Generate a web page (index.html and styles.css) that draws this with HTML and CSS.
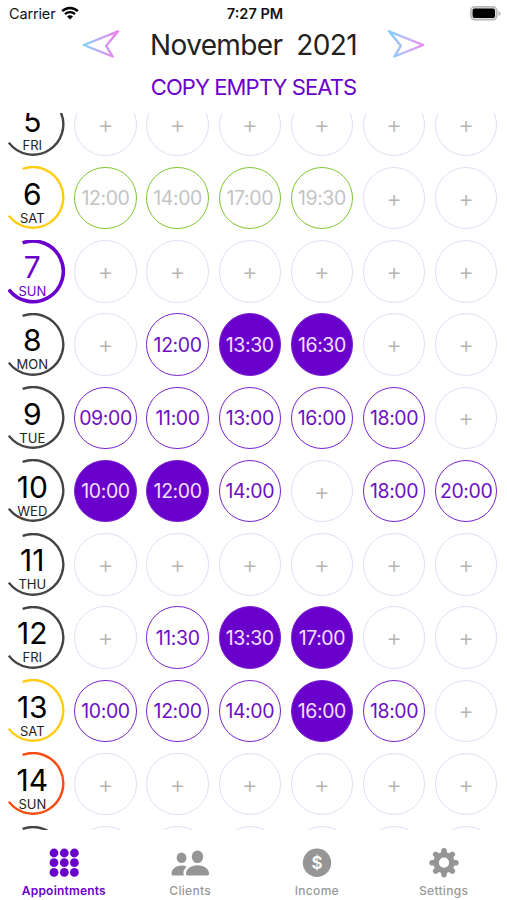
FILE: index.html
```html
<!DOCTYPE html>
<html lang="en">

<head>
    <meta charset="UTF-8">
    <meta name="viewport" content="width=device-width, initial-scale=1.0">
    <title>Appointments</title>
    <link rel="stylesheet" href="styles.css">
</head>

<body>
    <div class="status-bar">
        <div class="carrier">
            <span class="carrier-name">Carrier</span>
            <svg class="wifi" viewBox="0 0 18 14" width="18" height="14">
                <path d="M1.2 5.2A11.2 11.2 0 0 1 16.8 5.2" fill="none" stroke="#000" stroke-width="2.5" />
                <path d="M4 8.2A7.2 7.2 0 0 1 14 8.2" fill="none" stroke="#000" stroke-width="2.3" />
                <path d="M6 10.4A4.2 4.2 0 0 1 12 10.4L9 13.6Z" />
            </svg>
        </div>
        <span class="clock">7:27 PM</span>
        <svg class="battery" viewBox="0 0 31 15" width="31" height="15">
            <rect x="0.8" y="0.8" width="26" height="13" rx="4" fill="#ddd" stroke="#b5b5b5" stroke-width="1.5" />
            <rect x="2.6" y="2.6" width="22.4" height="9.4" rx="2" />
            <path d="M28.6 5v5q2-.8 2-2.5t-2-2.5z" fill="#b5b5b5" />
        </svg>
    </div>

    <header class="month-bar">
        <svg class="arrow" viewBox="0 0 38 32" width="38" height="32">
            <defs>
                <linearGradient id="prev-color">
                    <stop offset="0" stop-color="#7fd4fa" />
                    <stop offset="0.5" stop-color="#c2a8f2" />
                    <stop offset="1" stop-color="#ee7dea" />
                </linearGradient>
            </defs>
            <path d="M1.8 16L36 2.3L24.2 16.8L30.6 27.5Z" stroke="url(#prev-color)" />
        </svg>
        <h1 class="month"><span>November</span><span>2021</span></h1>
        <svg class="arrow" viewBox="0 0 38 32" width="38" height="32">
            <defs>
                <linearGradient id="next-color">
                    <stop offset="0" stop-color="#7fd0fa" />
                    <stop offset="0.5" stop-color="#bdb4f8" />
                    <stop offset="1" stop-color="#ee86f0" />
                </linearGradient>
            </defs>
            <path d="M36.2 16L2 2.3L13.8 16.8L7.4 27.5Z" stroke="url(#next-color)" />
        </svg>
    </header>

    <button class="copy-btn">COPY EMPTY SEATS</button>

    <main class="schedule" id="schedule"></main>

    <nav class="tab-bar">
        <a class="tab active">
            <svg viewBox="0 0 30 30" width="30" height="30">
                <circle cx="5" cy="5" r="4.4" /><circle cx="15.3" cy="5" r="4.4" /><circle cx="25.4" cy="5" r="4.4" />
                <circle cx="5" cy="14.7" r="4.4" /><circle cx="15.3" cy="14.7" r="4.4" /><circle cx="25.4" cy="14.7" r="4.4" />
                <circle cx="5" cy="24.4" r="4.4" /><circle cx="15.3" cy="24.4" r="4.4" /><circle cx="25.4" cy="24.4" r="4.4" />
            </svg>
            <span>Appointments</span>
        </a>
        <a class="tab">
            <svg viewBox="0 0 40 30" width="40" height="30">
                <ellipse cx="11.5" cy="9.8" rx="4.9" ry="5.3" />
                <path d="M3.2 27.5q-1.7 0-1.7-1.5c0-5 4.5-8.5 10-8.5q3.2 0 5.3 1.2c-2.500 2-4.200 5-2.800 8.800z" />
                <ellipse cx="27.5" cy="8.8" rx="5.7" ry="6.3" />
                <path d="M17.5 27.5q-1.6 0-1.6-1.7c0-4.6 5-8.6 11.6-8.6s11.6 4 11.6 8.6q0 1.7-1.6 1.7z" />
            </svg>
            <span>Clients</span>
        </a>
        <a class="tab">
            <svg viewBox="0 0 30 30" width="30" height="30">
                <circle cx="15" cy="14.7" r="14.2" />
                <text class="dollar" x="15" y="20.8" text-anchor="middle">$</text>
            </svg>
            <span>Income</span>
        </a>
        <a class="tab">
            <svg viewBox="0 0 30 30" width="30" height="30">
                <g class="gear">
                    <circle cx="15" cy="14.7" r="7.9" />
                    <path d="M15 2.8V5M15 24.4V26.6M3.1 14.7H5.3M24.7 14.7H26.9M6.7 6.4L8 7.7M22 21.7L23.3 23M6.7 23L8 21.7M22 7.7L23.3 6.4" />
                </g>
            </svg>
            <span>Settings</span>
        </a>
    </nav>

    <script>
        // slot: '' = empty, '*' = booked, '-' = past
        const days = [
            { date: 5, name: 'FRI', slots: [] },
            { date: 6, name: 'SAT', type: 'saturday', slots: ['-12:00', '-14:00', '-17:00', '-19:30'] },
            { date: 7, name: 'SUN', type: 'today', slots: [] },
            { date: 8, name: 'MON', slots: ['', '12:00', '*13:30', '*16:30'] },
            { date: 9, name: 'TUE', slots: ['09:00', '11:00', '13:00', '16:00', '18:00'] },
            { date: 10, name: 'WED', slots: ['*10:00', '*12:00', '14:00', '', '18:00', '20:00'] },
            { date: 11, name: 'THU', slots: [] },
            { date: 12, name: 'FRI', slots: ['', '11:30', '*13:30', '*17:00'] },
            { date: 13, name: 'SAT', type: 'saturday', slots: ['10:00', '12:00', '14:00', '*16:00', '18:00'] },
            { date: 14, name: 'SUN', type: 'sunday', slots: [] }
        ];

        function renderSlot(value) {
            if (!value) return '<div class="slot empty">+</div>';
            if (value[0] === '*') return `<div class="slot booked">${value.slice(1)}</div>`;
            if (value[0] === '-') return `<div class="slot past">${value.slice(1)}</div>`;
            return `<div class="slot">${value}</div>`;
        }

        const arc = `
            <svg class="arc" viewBox="0 0 57 64" width="57" height="64">
                <path d="M14.6 2.9A30.3 30.3 0 1 1 0.8 49.6" />
            </svg>`;

        const schedule = document.getElementById('schedule');
        days.forEach(day => {
            const row = document.createElement('div');
            row.className = 'row';
            let html = `
                <div class="day ${day.type || ''}">
                    ${arc}
                    <span class="date">${day.date}</span>
                    <span class="name">${day.name}</span>
                </div>`;
            for (let i = 0; i < 6; i++) {
                html += renderSlot(day.slots[i]);
            }
            row.innerHTML = html;
            schedule.appendChild(row);
        });

        // top edge of the next row
        const nextRow = document.createElement('div');
        nextRow.className = 'row';
        nextRow.innerHTML = `<div class="day">${arc}</div>` + '<div class="slot empty"></div>'.repeat(6);
        schedule.appendChild(nextRow);
    </script>
</body>

</html>
```
FILE: styles.css
```css
* {
    box-sizing: border-box;
}

body {
    margin: 0;
    height: 900px;
    display: flex;
    flex-direction: column;
    overflow: hidden;
    background-color: white;
    font-family: Inter, "Liberation Sans", sans-serif;
    color: #111;
}

/* status bar */
.status-bar {
    height: 27px;
    padding: 0 6px 0 9px;
    display: grid;
    grid-template-columns: 1fr auto 1fr;
    align-items: center;
    font-size: 14.5px;
}

.carrier {
    display: flex;
    align-items: center;
    gap: 6px;
}

.carrier-name {
    letter-spacing: -0.15px;
}

.wifi {
    margin-top: -2px;
}

.clock {
    font-weight: 600;
}

.battery {
    justify-self: end;
}

/* month switcher */
.month-bar {
    height: 35px;
    display: flex;
    justify-content: center;
    align-items: center;
    gap: 30.5px;
}

.arrow {
    fill: none;
    stroke-width: 2.4;
    stroke-linejoin: round;
}

.month {
    margin: 0;
    display: flex;
    gap: 14px;
    font-size: 28px;
    font-weight: 400;
    letter-spacing: -0.65px;
    color: #222;
}

.copy-btn {
    height: 51px;
    padding: 0 0 1px;
    border: none;
    background: none;
    color: #6a00cc;
    font-family: inherit;
    font-size: 22px;
    letter-spacing: -0.9px;
}

/* schedule */
.schedule {
    height: 717px;
    padding-left: 8px;
    overflow: hidden;
}

.row {
    height: 62.5px;
    margin-bottom: 10.75px;
    display: grid;
    grid-template-columns: 56.6px repeat(6, 62.5px);
    column-gap: 9.65px;
}

.row:first-child {
    margin-top: -19.5px;
}

.day {
    position: relative;
    display: flex;
    flex-direction: column;
    align-items: center;
    padding: 10px 8px 0 0;
}

.arc {
    position: absolute;
    top: -0.5px;
    left: 0;
    fill: none;
    stroke: #444;
    stroke-width: 2.4;
}

.date {
    font-size: 30px;
    line-height: 34px;
    color: #000;
}

.name {
    font-size: 13px;
    line-height: 15px;
    color: #222;
}

.saturday .arc {
    stroke: #ffcc12;
}

.sunday .arc {
    stroke: #fa4b10;
}

.today .arc {
    stroke: #6a00cc;
    stroke-width: 3.6;
}

.today .date,
.today .name {
    color: #6a00cc;
}

.slot {
    display: flex;
    justify-content: center;
    align-items: center;
    border: 1.5px solid #7a22cc;
    border-radius: 50%;
    color: #6d10c4;
    font-size: 19.5px;
    letter-spacing: -0.4px;
}

.slot.booked {
    background-color: #6a00cc;
    color: #f3e0ff;
}

.slot.past {
    border-color: #7fc52e;
    color: #c4c4c4;
}

.slot.empty {
    border-color: #e3ddf3;
    color: #b4b4b4;
    font-size: 24px;
    font-weight: 300;
    letter-spacing: 0;
}

/* bottom tabs */
.tab-bar {
    height: 70px;
    display: grid;
    grid-template-columns: repeat(4, 1fr);
    padding-top: 18px;
}

.tab {
    display: flex;
    flex-direction: column;
    align-items: center;
    gap: 5px;
    color: #999;
    fill: #959595;
    font-size: 12px;
    font-weight: 500;
    letter-spacing: 0.3px;
}

.tab.active {
    padding-left: 1px;
    color: #6a00cc;
    fill: #6a00cc;
    font-weight: 600;
    letter-spacing: 0.2px;
}

.dollar {
    fill: white;
    font-size: 17px;
    font-weight: 600;
    letter-spacing: 0;
}

.gear {
    fill: none;
    stroke: #959595;
    stroke-width: 5.6;
    stroke-linecap: round;
}
```
